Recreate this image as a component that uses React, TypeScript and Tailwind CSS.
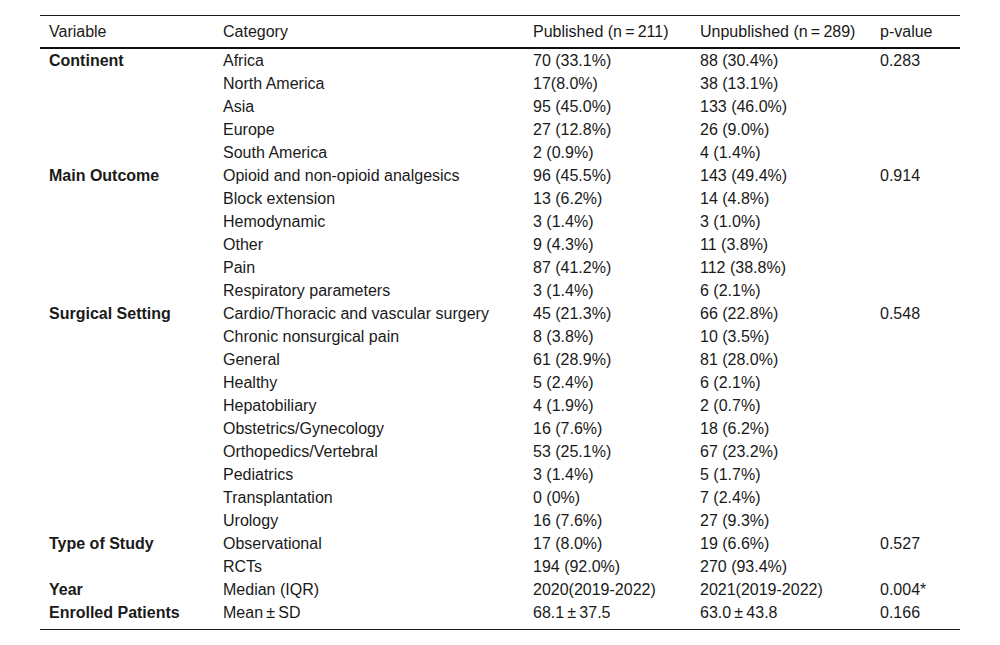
type Row = { variable?: string; category: string; pub: string; unpub: string; p?: string };

const rows: Row[] = [
  { variable: 'Continent', category: 'Africa', pub: '70 (33.1%)', unpub: '88 (30.4%)', p: '0.283' },
  { category: 'North America', pub: '17(8.0%)', unpub: '38 (13.1%)' },
  { category: 'Asia', pub: '95 (45.0%)', unpub: '133 (46.0%)' },
  { category: 'Europe', pub: '27 (12.8%)', unpub: '26 (9.0%)' },
  { category: 'South America', pub: '2 (0.9%)', unpub: '4 (1.4%)' },
  { variable: 'Main Outcome', category: 'Opioid and non-opioid analgesics', pub: '96 (45.5%)', unpub: '143 (49.4%)', p: '0.914' },
  { category: 'Block extension', pub: '13 (6.2%)', unpub: '14 (4.8%)' },
  { category: 'Hemodynamic', pub: '3 (1.4%)', unpub: '3 (1.0%)' },
  { category: 'Other', pub: '9 (4.3%)', unpub: '11 (3.8%)' },
  { category: 'Pain', pub: '87 (41.2%)', unpub: '112 (38.8%)' },
  { category: 'Respiratory parameters', pub: '3 (1.4%)', unpub: '6 (2.1%)' },
  { variable: 'Surgical Setting', category: 'Cardio/Thoracic and vascular surgery', pub: '45 (21.3%)', unpub: '66 (22.8%)', p: '0.548' },
  { category: 'Chronic nonsurgical pain', pub: '8 (3.8%)', unpub: '10 (3.5%)' },
  { category: 'General', pub: '61 (28.9%)', unpub: '81 (28.0%)' },
  { category: 'Healthy', pub: '5 (2.4%)', unpub: '6 (2.1%)' },
  { category: 'Hepatobiliary', pub: '4 (1.9%)', unpub: '2 (0.7%)' },
  { category: 'Obstetrics/Gynecology', pub: '16 (7.6%)', unpub: '18 (6.2%)' },
  { category: 'Orthopedics/Vertebral', pub: '53 (25.1%)', unpub: '67 (23.2%)' },
  { category: 'Pediatrics', pub: '3 (1.4%)', unpub: '5 (1.7%)' },
  { category: 'Transplantation', pub: '0 (0%)', unpub: '7 (2.4%)' },
  { category: 'Urology', pub: '16 (7.6%)', unpub: '27 (9.3%)' },
  { variable: 'Type of Study', category: 'Observational', pub: '17 (8.0%)', unpub: '19 (6.6%)', p: '0.527' },
  { category: 'RCTs', pub: '194 (92.0%)', unpub: '270 (93.4%)' },
  { variable: 'Year', category: 'Median (IQR)', pub: '2020(2019-2022)', unpub: '2021(2019-2022)', p: '0.004*' },
  { variable: 'Enrolled Patients', category: 'Mean\u2009\u00b1\u2009SD', pub: '68.1\u2009\u00b1\u200937.5', unpub: '63.0\u2009\u00b1\u200943.8', p: '0.166' },
];

export default function App() {
  return (
    <div className="w-[1000px] h-[645px] bg-white pt-[15px] px-[40px] font-['Liberation_Sans',Arial,sans-serif] text-[16px] text-[#1a1a1a]">
      <table className="w-[920px] border-collapse table-fixed">
        <colgroup>
          <col className="w-[174px]" />
          <col className="w-[310px]" />
          <col className="w-[167px]" />
          <col className="w-[180px]" />
          <col className="w-[89px]" />
        </colgroup>
        <thead>
          <tr className="h-[32px] border-t border-[#1a1a1a] border-b-2 border-b-[#111] text-left">
            <th className="font-normal pl-[9px] pt-[1px] whitespace-nowrap">Variable</th>
            <th className="font-normal pl-[9px] pt-[1px] whitespace-nowrap">Category</th>
            <th className="font-normal pl-[9px] pt-[1px] whitespace-nowrap">Published (n{'\u2009'}={'\u2009'}211)</th>
            <th className="font-normal pl-[9px] pt-[1px] whitespace-nowrap">Unpublished (n{'\u2009'}={'\u2009'}289)</th>
            <th className="font-normal pl-[9px] pt-[1px] whitespace-nowrap">p-value</th>
          </tr>
        </thead>
        <tbody>
          {rows.map((r, i) => (
            <tr key={i} className="h-[23px] leading-[23px]">
              <td className="pl-[9px] font-bold whitespace-nowrap">{r.variable}</td>
              <td className="pl-[9px] whitespace-nowrap">{r.category}</td>
              <td className="pl-[9px] whitespace-nowrap">{r.pub}</td>
              <td className="pl-[9px] whitespace-nowrap">{r.unpub}</td>
              <td className="pl-[9px] whitespace-nowrap">{r.p}</td>
            </tr>
          ))}
          <tr className="h-[6px] border-b border-[#1a1a1a]">
            <td colSpan={5}></td>
          </tr>
        </tbody>
      </table>
    </div>
  );
}
